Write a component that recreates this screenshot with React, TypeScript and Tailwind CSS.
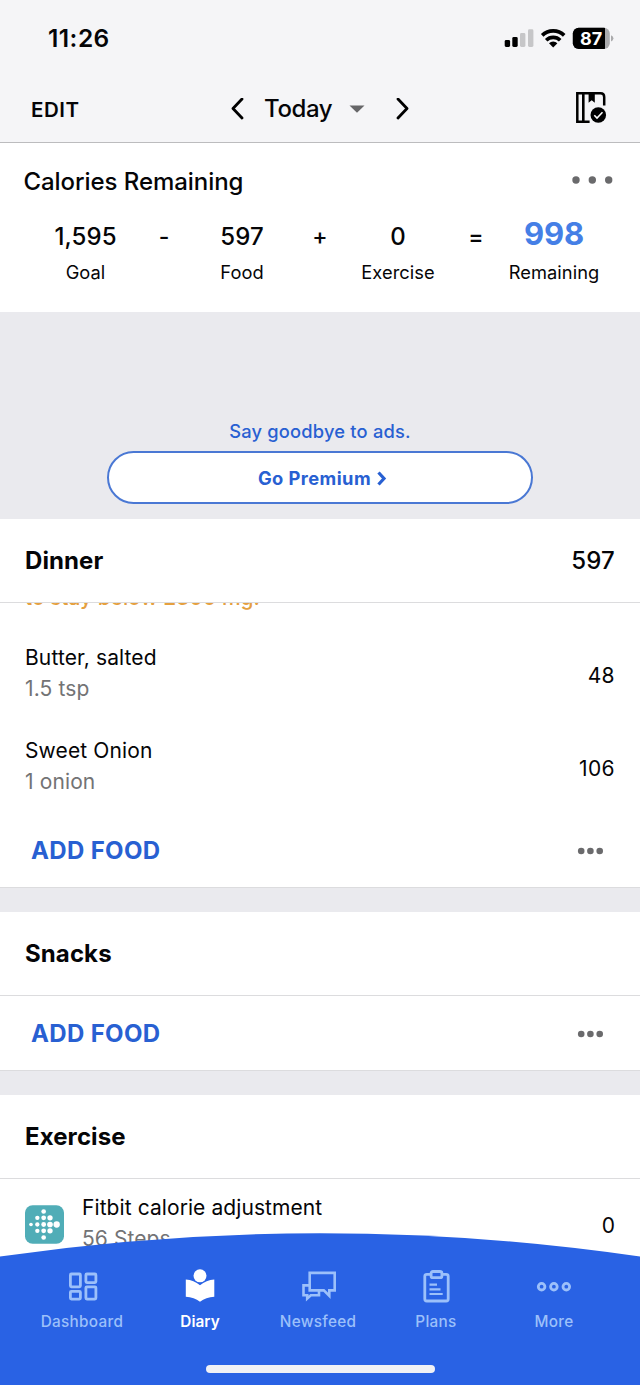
import React from "react";

const blue = "text-[#2860d2]";

function StatusBar() {
  return (
    <div className="flex h-[77px] items-center justify-between pl-12 pr-[26px]">
      <span className="-mt-px text-[24.5px] font-semibold leading-[30px] tracking-[0.45px]">11:26</span>
      <div className="flex items-center">
        <svg className="-mt-px" width="110" height="24" viewBox="504 26 110 24">
          <rect x="504.7" y="40" width="5.4" height="7" rx="1.4" />
          <rect x="512.3" y="37" width="5.4" height="10" rx="1.4" />
          <rect x="520" y="33" width="5.4" height="14" rx="1.4" fill="#c6c6c8" />
          <rect x="528" y="29.3" width="5.4" height="17.7" rx="1.4" fill="#c6c6c8" />
          <g fill="none" stroke="#000" strokeWidth="3.6">
            <path d="M542.2 35.4 A15.6 15.6 0 0 1 564.2 35.4" />
            <path d="M546.2 40.2 A10 10 0 0 1 560.2 40.2" />
          </g>
          <path d="M549 43.2 A6 6 0 0 1 557.4 43.2 L553.2 47.4 Z" />
          <clipPath id="battery"><rect x="572.8" y="27.8" width="37" height="21.2" rx="5.8" /></clipPath>
          <g clipPath="url(#battery)">
            <rect x="572" y="27" width="39" height="23" fill="#aaaaac" />
            <rect x="572" y="27" width="33" height="23" fill="#000" />
          </g>
          <path d="M611 35.2 Q613.4 36 613.4 38.3 Q613.4 40.6 611 41.6 Z" fill="#aaaaac" />
          <text x="591.2" y="44.7" textAnchor="middle" fill="#fff" fontSize="18" fontWeight="700">87</text>
        </svg>
      </div>
    </div>
  );
}

function DateBar() {
  return (
    <div className="flex h-[65px] items-center pl-[31px] pr-[33px]">
      <span className="mt-px w-[200px] text-[20.5px] font-semibold leading-[30px] tracking-[0.55px]">EDIT</span>
      <div className="-mt-[2px] flex flex-1 items-center">
        <svg width="14" height="22" viewBox="0 0 14 22" fill="none" stroke="#000" strokeWidth="2.8" strokeLinecap="round" strokeLinejoin="round">
          <path d="M11 1 L2 10.5 L11 20" />
        </svg>
        <span className="ml-[19px] mt-px w-[68px] whitespace-nowrap text-[24px] font-medium leading-[30px] tracking-[-0.4px]">Today</span>
        <svg className="ml-[17px] mt-px" width="16" height="8" viewBox="0 0 16 8"><path d="M0.5 0.5 H15.5 L8 7.7 Z" fill="#666668" /></svg>
        <svg className="ml-[30px]" width="14" height="22" viewBox="0 0 14 22" fill="none" stroke="#000" strokeWidth="2.8" strokeLinecap="round" strokeLinejoin="round">
          <path d="M3 1 L12 10.5 L3 20" />
        </svg>
      </div>
      <svg className="-mt-[3px]" width="31" height="32" viewBox="576 92 31 32" fill="none" stroke="#000" strokeWidth="2.5">
        <path d="M589.6 121.8 H577.3 V93.3 H600.5 Q604.2 93.3 604.2 97 V105.6" />
        <path d="M583.3 93 V122" strokeWidth="2.6" />
        <path d="M588.6 92.5 H594.8 V102.8 L591.7 100.2 L588.6 102.8 Z" fill="#000" stroke="none" />
        <circle cx="598.3" cy="115" r="7.8" fill="#000" stroke="none" />
        <path d="M594.3 115.3 L597 118 L602.5 112.3" stroke="#fff" strokeWidth="1.6" />
      </svg>
    </div>
  );
}

function Term({ value, label, width }: { value: string; label: string; width: string }) {
  return (
    <div className={`flex flex-col items-center ${width}`}>
      <span className="mt-px text-[24px] font-medium leading-[36px] tracking-[0.1px]">{value}</span>
      <span className="-mt-px text-[18.3px] leading-[36px] tracking-[0.05px]">{label}</span>
    </div>
  );
}

function Operator({ sign, width }: { sign: string; width: string }) {
  return <span className={`mt-px text-center text-[23px] font-medium leading-[37px] ${width}`}>{sign}</span>;
}

function CaloriesRemaining() {
  return (
    <section className="h-[169px] bg-white pt-[20px]">
      <div className="flex h-[37px] items-center justify-between pl-[23.5px] pr-[27px]">
        <h1 className="text-[24px] font-medium leading-[37px] tracking-[-0.06px]">Calories Remaining</h1>
        <svg className="-mt-[4px]" width="41" height="8" fill="#6a6a6c"><circle cx="4" cy="4" r="3.7" /><circle cx="20.3" cy="4" r="3.7" /><circle cx="36.7" cy="4" r="3.7" /></svg>
      </div>
      <div className="mt-[18px] flex pl-[25px]">
        <Term value="1,595" label="Goal" width="w-[121px]" />
        <Operator sign="-" width="w-[36px]" />
        <Term value="597" label="Food" width="w-[120px]" />
        <Operator sign="+" width="w-[36px]" />
        <Term value="0" label="Exercise" width="w-[120px]" />
        <Operator sign="=" width="w-[36px]" />
        <div className="flex w-[120px] flex-col items-center">
          <span className="-mt-[2px] text-[31px] font-bold leading-[36px] tracking-[-0.2px] text-[#457fe6]">998</span>
          <span className="mt-[2px] text-[18.3px] leading-[36px] tracking-[0.05px]">Remaining</span>
        </div>
      </div>
    </section>
  );
}

function PremiumBanner() {
  return (
    <section className="flex h-[207px] flex-col items-center bg-[#eaeaee] pt-[105px]">
      <span className={`text-[18.3px] font-medium leading-[28px] tracking-[0.2px] ${blue}`}>Say goodbye to ads.</span>
      <button className={`mt-[6px] flex h-[53px] w-[426px] items-center justify-center rounded-full border-2 border-[#4a78d4] bg-white pl-[5px] pt-[2px] text-[18.3px] font-bold tracking-[0.45px] ${blue}`}>
        Go Premium
        <svg className="ml-[6px]" width="10" height="15" viewBox="0 0 10 15" fill="none" stroke="currentColor" strokeWidth="3.2"><path d="M1.5 1.5 L7 7.5 L1.5 13.5" /></svg>
      </button>
    </section>
  );
}

function SectionHeader({ title, total }: { title: string; total?: string }) {
  return (
    <div className="flex h-[83px] items-center justify-between bg-white px-[25px] text-[24px]">
      <h2 className="font-bold tracking-[0.1px]">{title}</h2>
      {total && <span className="font-medium tracking-[0.2px]">{total}</span>}
    </div>
  );
}

function FoodRow({ name, amount, calories }: { name: string; amount: string; calories: string }) {
  return (
    <div className="flex h-[93px] items-center justify-between pl-[25px] pr-[25px] text-[21px]">
      <div className="-mt-px flex flex-col leading-[31px] tracking-[0.12px]">
        <span>{name}</span>
        <span className="text-[#737375]">{amount}</span>
      </div>
      <span className="mt-[4px] tracking-[0.4px]">{calories}</span>
    </div>
  );
}

function AddFood() {
  return (
    <div className="flex h-[74px] items-center justify-between bg-white pl-[31px] pr-[36px] pt-[2px]">
      <button className={`text-[24px] font-bold tracking-[0.35px] ${blue}`}>ADD FOOD</button>
      <svg className="-mt-px" width="27" height="8" fill="#6a6a6c"><circle cx="4.2" cy="4" r="3.3" /><circle cx="13.4" cy="4" r="3.3" /><circle cx="22.7" cy="4" r="3.3" /></svg>
    </div>
  );
}

const fitbitDots = [
  [92, 135, 5.5], [111, 115, 6.5], [111, 135, 6.5], [111, 154, 6.5],
  [130, 96, 7], [130, 115, 7.2], [130, 135, 7.2], [130, 154, 7.2], [130, 174, 7],
  [149, 115, 8], [149, 135, 8.5], [149, 154, 8], [169, 135, 9.5],
];

function ExerciseRow() {
  return (
    <div className="flex h-[92px] items-center bg-white pl-[25px] pr-[25px] text-[21px]">
      <svg className="-mt-px" width="39" height="39" viewBox="74 77 117 116">
        <rect x="74" y="77" width="117" height="116" rx="23" fill="#50adb7" />
        {fitbitDots.map(([x, y, r]) => <circle key={`${x}-${y}`} cx={x} cy={y} r={r} fill="#fff" />)}
      </svg>
      <div className="ml-[18px] mt-[-5px] flex flex-1 flex-col leading-[31px] tracking-[0.08px]">
        <span>Fitbit calorie adjustment</span>
        <span className="text-[#737375]">56 Steps</span>
      </div>
      <span className="mt-[2px]">0</span>
    </div>
  );
}

function NavItem({ label, active, children }: { label: string; active?: boolean; children: React.ReactNode }) {
  return (
    <div className={`flex w-[118px] flex-col items-center ${active ? "text-white" : "text-[#9cc0fa]"}`}>
      <svg width="40" height="40" viewBox="0 0 40 40" fill="none" stroke="currentColor" strokeWidth="2.8">{children}</svg>
      <span className={`mt-[3px] text-[15.3px] leading-[24px] ${active ? "font-semibold tracking-[0.05px]" : "font-medium tracking-[0.3px]"}`}>{label}</span>
    </div>
  );
}

function BottomNav() {
  return (
    <nav className="absolute inset-x-0 bottom-0 h-[152px]">
      <svg className="absolute inset-0" width="640" height="152" viewBox="0 0 640 152">
        <path d="M0 23.6 A2218 2218 0 0 1 640 23.6 V152 H0 Z" fill="#2962e4" />
      </svg>
      <div className="relative flex pl-[23px] pt-[34px]">
        <NavItem label="Dashboard">
          <rect x="8.4" y="7" width="10" height="12.8" rx="1" />
          <rect x="23.9" y="7" width="10" height="8.6" rx="1" />
          <rect x="8.4" y="24.3" width="10" height="7.8" rx="1" />
          <rect x="23.9" y="19.8" width="10" height="12.3" rx="1" />
        </NavItem>
        <NavItem label="Diary" active>
          <circle cx="20" cy="8.8" r="6.5" fill="currentColor" stroke="none" />
          <path d="M5.8 12.5 Q13.9 13 20 18.2 Q26.2 13 34.3 12.5 V29.7 Q25.9 30 20 34.7 Q14.2 30 5.8 29.7 Z" fill="currentColor" stroke="none" />
        </NavItem>
        <NavItem label="Newsfeed">
          <path d="M11.7 5.9 H36.7 V23.4 H31.3 V28.8 L25.8 23.4 H11.7 Z" strokeWidth="2.6" />
          <path d="M11.7 18.4 H5.5 V28.2 H9.2 V31.6 L12.8 28.2 H21 V23.4" strokeWidth="2.6" />
        </NavItem>
        <NavItem label="Plans">
          <path d="M14.5 7.3 H10.8 Q8.8 7.3 8.8 9.3 V32 Q8.8 34 10.8 34 H30.2 Q32.2 34 32.2 32 V9.3 Q32.2 7.3 30.2 7.3 H26.5" />
          <rect x="15.1" y="4.5" width="10.8" height="6.2" rx="1.8" />
          <path d="M13.5 17.7 H21 M13.5 22.3 H24.5 M13.5 27 H26.7" strokeWidth="2.2" />
        </NavItem>
        <NavItem label="More">
          <circle cx="7.6" cy="19.7" r="3.3" /><circle cx="19.9" cy="19.7" r="3.3" /><circle cx="32.3" cy="19.7" r="3.3" />
        </NavItem>
      </div>
      <div className="relative ml-[205.5px] mt-[30.5px] h-[8px] w-[229px] rounded-full bg-[#f0f1f5]" />
    </nav>
  );
}

export default function App() {
  return (
    <main className="relative h-[1385px] w-[640px] overflow-hidden bg-[#eaeaee] font-['Inter',sans-serif] text-[#050507]">
      <header className="h-[143px] border-b border-[#bcbcbe] bg-[#f5f5f7]">
        <StatusBar />
        <DateBar />
      </header>
      <CaloriesRemaining />
      <PremiumBanner />
      <section>
        <SectionHeader title="Dinner" total="597" />
        <div className="h-[286px] overflow-hidden border-y border-[#dcdcde] bg-white">
          <p className="-mt-[18px] h-[42px] pl-[25px] text-[21px] font-medium leading-[26px] tracking-[-0.05px] text-[#e5a03f]">to stay below 2300 mg.</p>
          <FoodRow name="Butter, salted" amount="1.5 tsp" calories="48" />
          <FoodRow name="Sweet Onion" amount="1 onion" calories="106" />
          <AddFood />
        </div>
      </section>
      <section className="mt-[24px]">
        <SectionHeader title="Snacks" />
        <div className="border-y border-[#dcdcde]"><AddFood /></div>
      </section>
      <section className="mt-[24px]">
        <SectionHeader title="Exercise" />
        <div className="border-t border-[#dcdcde]"><ExerciseRow /></div>
      </section>
      <BottomNav />
    </main>
  );
}
